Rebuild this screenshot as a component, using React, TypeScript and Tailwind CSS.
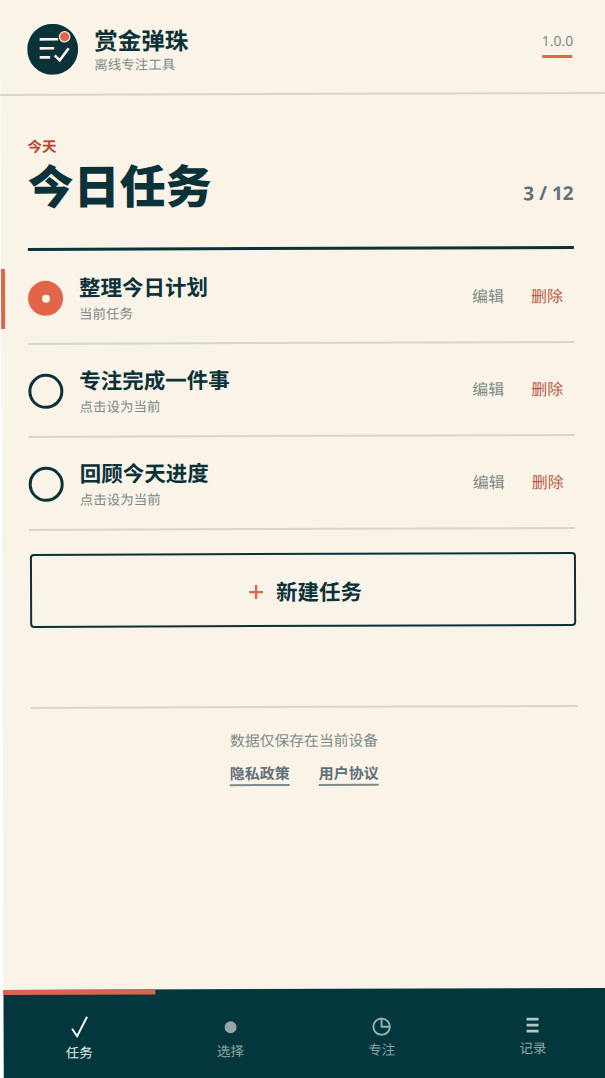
const font = { fontFamily: '"Noto Sans CJK SC", "Noto Sans", sans-serif' };

function Logo() {
  return (
    <svg width="51" height="51" viewBox="0 0 51 51" className="shrink-0">
      <circle cx="25.5" cy="25.5" r="25.5" fill="#0b3239" />
      <path d="M12.5 15.5H31M12.5 24.5H27M12.5 33.5H23" stroke="#f9f3e8" strokeWidth="2.6" fill="none" />
      <path d="M27.5 31.5L32.5 36.5L41.5 24.5" stroke="#f9f3e8" strokeWidth="2.6" fill="none" />
      <circle cx="37.5" cy="13" r="5.2" fill="#e2654a" stroke="#f9f3e8" strokeWidth="1.2" />
    </svg>
  );
}

function Row({ title, sub, active }: { title: string; sub: string; active?: boolean }) {
  return (
    <div className={`relative h-[93px] border-b-2 border-[#d8d5ca] flex items-center pt-[2px] ${active ? "mt-[1px]" : ""}`}>
      {active && <div className="absolute left-[-27px] top-[17px] w-[4px] h-[60px] bg-[#e2654a]" />}
      {active ? (
        <div className="w-[35px] h-[35px] rounded-full bg-[#e2654a] flex items-center justify-center shrink-0">
          <div className="w-[8px] h-[8px] rounded-full bg-[#f9f3e8]" />
        </div>
      ) : (
        <div className="w-[35px] h-[35px] rounded-full border-[3px] border-[#0b3239] shrink-0" />
      )}
      <div className="ml-[16px] mt-[-2px] flex-1 flex flex-col">
        <div className="text-[21.5px] leading-[28px] font-bold text-[#0b3239]">{title}</div>
        <div className="text-[13.5px] leading-[20px] mt-[2px] text-[#7f8b89]">{sub}</div>
      </div>
      <div className="text-[16px] text-[#7f8b89] mr-[27px] mb-[4px]">编辑</div>
      <div className="text-[16px] text-[#bd5a47] mr-[11px] mb-[4px]">删除</div>
    </div>
  );
}

function Tab({ label, active, iconClass, labelClass, children }: { label: string; active?: boolean; iconClass: string; labelClass: string; children: React.ReactNode }) {
  return (
    <div className="flex flex-col items-center">
      <div className={`h-[24px] flex items-center justify-center ${iconClass}`}>{children}</div>
      <div className={`text-[13.5px] leading-[20px] ${labelClass} ${active ? "text-[#e6eeec]" : "text-[#8fa5a3]"}`}>{label}</div>
    </div>
  );
}

export default function App() {
  return (
    <div className="w-[605px] h-[1078px] overflow-hidden bg-white">
      <div
        style={font}
        className="w-[607px] h-[1090px] bg-[#f9f3e8] flex flex-col origin-top-left -rotate-[0.2deg]"
      >
        <header className="h-[96px] shrink-0 border-b-2 border-[#d8d5ca] flex items-center pl-[27px] pr-[34px] pt-[5px]">
          <Logo />
          <div className="ml-[16px] flex-1 flex flex-col">
            <div className="text-[23.5px] leading-[29px] font-bold text-[#0b3239]">赏金弹珠</div>
            <div className="text-[13.5px] leading-[18px] text-[#7f8b89]">离线专注工具</div>
          </div>
          <div className="flex flex-col items-center mt-[-7px]">
            <div className="text-[14px] leading-[20px] text-[#7f8b89]" style={{ fontFamily: '"Noto Sans", sans-serif' }}>1.0.0</div>
            <div className="w-[30px] h-[3px] bg-[#e2654a] mt-[4px]" />
          </div>
        </header>

        <main className="flex-1 pl-[27px] pr-[34px]">
          <div className="mt-[39px] text-[14.5px] leading-[22px] font-bold text-[#b5482f]">今天</div>
          <div className="flex items-end justify-between border-b-[3px] border-[#0b3239] h-[94px]">
            <div className="text-[46px] leading-[54px] font-black text-[#0b3239] mb-[37px]">今日任务</div>
            <div className="text-[19px] leading-[24px] font-bold text-[#62717a] mb-[41px]" style={{ fontFamily: '"Noto Sans", sans-serif' }}>3 / 12</div>
          </div>

          <Row title="整理今日计划" sub="当前任务" active />
          <Row title="专注完成一件事" sub="点击设为当前" />
          <Row title="回顾今天进度" sub="点击设为当前" />

          <button className="mt-[23px] ml-[1px] w-full h-[74px] border-2 border-[#0b3239] rounded-[4px] flex items-center justify-center pl-[5px] pt-[3px]">
            <svg width="14" height="14" viewBox="0 0 14 14" className="mr-[13px]">
              <path d="M7 0V14M0 7H14" stroke="#e2654a" strokeWidth="2.4" />
            </svg>
            <span className="text-[21.5px] font-bold text-[#0b3239]">新建任务</span>
          </button>

          <div className="mt-[79px] ml-[1px] mr-[-2px] border-t-2 border-[#d8d5ca] flex flex-col items-center">
            <div className="mt-[21px] text-[14.8px] leading-[22px] text-[#7f8b89]">数据仅保存在当前设备</div>
            <div className="mt-[11px] flex gap-[29px]">
              <a className="text-[15px] leading-[22px] font-bold text-[#62717a] border-b-2 border-[#7f8b89]">隐私政策</a>
              <a className="text-[15px] leading-[22px] font-bold text-[#62717a] border-b-2 border-[#7f8b89]">用户协议</a>
            </div>
          </div>
        </main>

        <nav className="shrink-0 h-[100px] bg-[#03363d] relative grid grid-cols-4 pt-[25px] pr-[2px]">
          <div className="absolute left-0 top-0 w-[152px] h-[5px] bg-[#d8664c]" />
          <Tab label="任务" active iconClass="" labelClass="mt-[3px]">
            <svg width="18" height="22" viewBox="0 0 18 22">
              <path d="M1.5 13L6.5 20.5L16.5 1" stroke="#f3f5f2" strokeWidth="2" fill="none" />
            </svg>
          </Tab>
          <Tab label="选择" iconClass="mt-[1px]" labelClass="mt-[1px]">
            <div className="w-[12px] h-[12px] rounded-full bg-[#94a5a3]" />
          </Tab>
          <Tab label="专注" iconClass="mt-[1px]" labelClass="mt-[0px]">
            <svg width="20" height="20" viewBox="0 0 20 20">
              <circle cx="10" cy="10" r="8.2" stroke="#94b0ac" strokeWidth="2" fill="none" />
              <path d="M10 2V10H18" stroke="#94b0ac" strokeWidth="2" fill="none" />
            </svg>
          </Tab>
          <Tab label="记录" iconClass="" labelClass="mt-[0px]">
            <svg width="14" height="16" viewBox="0 0 14 16">
              <path d="M1 2H13M1 8H13M1 14H13" stroke="#b4c6c2" strokeWidth="2.6" fill="none" />
            </svg>
          </Tab>
        </nav>
      </div>
    </div>
  );
}
